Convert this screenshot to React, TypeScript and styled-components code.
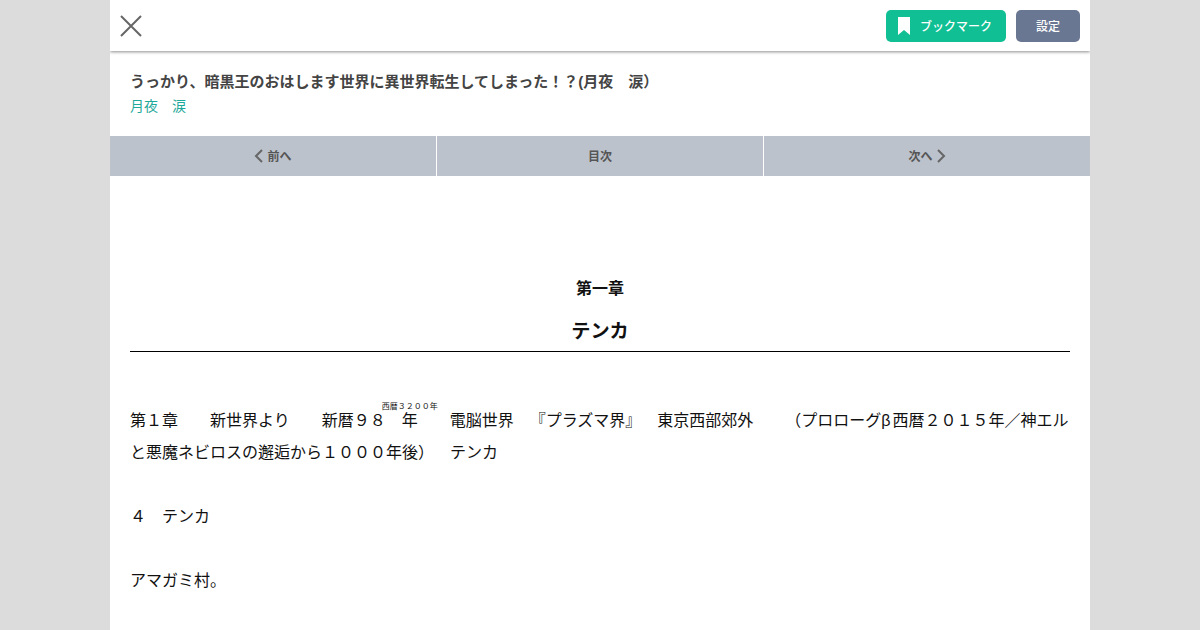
import React from 'react'
import styled, { createGlobalStyle } from 'styled-components'

const GlobalStyle = createGlobalStyle`
  html, body {
    margin: 0;
    padding: 0;
    height: 630px;
    overflow: hidden;
    background: #dcdcdc;
    font-family: "Liberation Sans", "Noto Sans CJK JP", sans-serif;
    text-spacing-trim: space-all;
  }
`

const Page = styled.div`
  width: 980px;
  height: 630px;
  margin: 0 auto;
  background: #fff;
  overflow: hidden;
`

const Toolbar = styled.header`
  display: flex;
  align-items: center;
  justify-content: space-between;
  height: 51px;
  padding: 0 10px;
  box-shadow: 0 1px 3px rgba(0, 0, 0, 0.45);
`

const Actions = styled.div`
  display: flex;
  gap: 10px;
`

const ActionButton = styled.button<{ $bg: string; $w: number }>`
  display: flex;
  align-items: center;
  justify-content: center;
  gap: 10px;
  width: ${({ $w }) => $w}px;
  height: 32px;
  padding: 0;
  border: 0;
  border-radius: 5px;
  background: ${({ $bg }) => $bg};
  color: #fff;
  font-family: inherit;
  font-size: 12px;
  font-weight: 500;
`

const BookmarkButton = styled(ActionButton)`
  padding-right: 2px;
`

const TitleBlock = styled.div`
  padding: 21px 20px 20px;
`

const Title = styled.h1`
  margin: 0;
  font-size: 15px;
  line-height: 20px;
  font-weight: bold;
  color: #444;
`

const Author = styled.a`
  display: block;
  margin-top: 4px;
  font-size: 14px;
  line-height: 20px;
  color: #1fa99a;
`

const Pager = styled.nav`
  display: grid;
  grid-template-columns: 1fr 1fr 1fr;
  gap: 1px;
  height: 40px;
  background: #fff;
`

const PagerItem = styled.div`
  display: flex;
  align-items: center;
  justify-content: center;
  gap: 3px;
  padding-bottom: 1px;
  background: #bcc2cb;
  color: #555;
  font-size: 12px;
  font-weight: bold;
`

const Body = styled.main`
  padding: 101px 20px 0;
  color: #111;
`

const Chapter = styled.h2`
  margin: 0;
  font-size: 16px;
  line-height: 24px;
  font-weight: bold;
  text-align: center;
`

const Subtitle = styled.h3`
  margin: 18px 0 0;
  padding-bottom: 7px;
  border-bottom: 1px solid #000;
  font-size: 19.2px;
  line-height: 25px;
  font-weight: bold;
  text-align: center;
`

const Prose = styled.div`
  margin-top: 52px;
  font-size: 16px;
  line-height: 32px;

  rt {
    position: relative;
    top: -2px;
    font-size: 8px;
  }
`

const Greek = styled.span`
  letter-spacing: 2px;
`

const Chevron = ({ flip }: { flip?: boolean }) => (
  <svg width="10" height="14" viewBox="0 0 10 14" fill="none" stroke="#666" strokeWidth="2">
    <path d={flip ? 'M2 1l6 6-6 6' : 'M8 1L2 7l6 6'} />
  </svg>
)

export default function App() {
  return (
    <Page lang="ja">
      <GlobalStyle />
      <Toolbar>
        <svg width="22" height="22" viewBox="0 0 22 22" stroke="#666" strokeWidth="2">
          <path d="M1 1l20 20M21 1L1 21" />
        </svg>
        <Actions>
          <BookmarkButton $bg="#10bf94" $w={120}>
            <svg width="12" height="18" viewBox="0 0 12 18" fill="#fff">
              <path d="M0 0h12v18l-6-5-6 5z" />
            </svg>
            ブックマーク
          </BookmarkButton>
          <ActionButton $bg="#6a7793" $w={64}>設定</ActionButton>
        </Actions>
      </Toolbar>
      <TitleBlock>
        <Title>うっかり、暗黒王のおはします世界に異世界転生してしまった！？(月夜　涙）</Title>
        <Author>月夜　涙</Author>
      </TitleBlock>
      <Pager>
        <PagerItem><Chevron />前へ</PagerItem>
        <PagerItem>目次</PagerItem>
        <PagerItem>次へ<Chevron flip /></PagerItem>
      </Pager>
      <Body>
        <Chapter>第一章</Chapter>
        <Subtitle>テンカ</Subtitle>
        <Prose>
          第１章　　新世界より　　新暦９８<ruby>年<rt>西暦３２００年</rt></ruby>　電脳世界　『プラズマ界』　東京西部郊外　　（プロローグ<Greek>β</Greek>西暦２０１５年／神エルと悪魔ネビロスの邂逅から１０００年後）　テンカ
          <br /><br />
          ４　テンカ
          <br /><br />
          アマガミ村。
        </Prose>
      </Body>
    </Page>
  )
}
